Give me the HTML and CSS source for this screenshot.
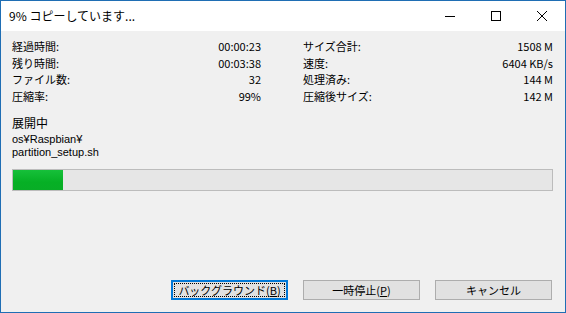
FILE: index.html
```html
<!DOCTYPE html>
<html lang="ja">
<head>
<meta charset="utf-8">
<link rel="stylesheet" href="styles.css">
</head>
<body>
<div class="window">
  <div class="titlebar">
    <div class="title">9% コピーしています...</div>
    <div class="caption-buttons">
      <div class="cbtn"><svg width="10" height="10" viewBox="0 0 10 10"><path d="M0 5.5H10" stroke="#000" stroke-width="1"/></svg></div>
      <div class="cbtn"><svg width="10" height="10" viewBox="0 0 10 10"><rect x="0.5" y="0.5" width="9" height="9" fill="none" stroke="#000" stroke-width="1"/></svg></div>
      <div class="cbtn"><svg width="10" height="10" viewBox="0 0 10 10"><path d="M0 0L10 10M10 0L0 10" stroke="#000" stroke-width="1"/></svg></div>
    </div>
  </div>
  <div class="content">
    <div class="stats">
      <div class="col">
        <div class="row"><span>経過時間:</span><span>00:00:23</span></div>
        <div class="row"><span>残り時間:</span><span>00:03:38</span></div>
        <div class="row"><span>ファイル数:</span><span>32</span></div>
        <div class="row"><span>圧縮率:</span><span>99%</span></div>
      </div>
      <div class="col">
        <div class="row"><span>サイズ合計:</span><span>1508 M</span></div>
        <div class="row"><span>速度:</span><span>6404 KB/s</span></div>
        <div class="row"><span>処理済み:</span><span>144 M</span></div>
        <div class="row"><span>圧縮後サイズ:</span><span>142 M</span></div>
      </div>
    </div>
    <div class="section-title">展開中</div>
    <div class="path">
      <div class="path-line">os¥Raspbian¥</div>
      <div class="path-line">partition_setup.sh</div>
    </div>
    <div class="progress"><div class="progress-fill" style="width: 9.3%"></div></div>
    <div class="spacer"></div>
    <div class="buttons">
      <button class="btn focused"><span class="focus-ring">バックグラウンド(<u>B</u>)</span></button>
      <button class="btn">一時停止(<u>P</u>)</button>
      <button class="btn">キャンセル</button>
    </div>
  </div>
</div>
</body>
</html>
```

FILE: styles.css
```css
html, body {
  margin: 0;
  padding: 0;
}
body {
  width: 566px;
  height: 313px;
  font-family: "Noto Sans CJK JP", "Liberation Sans", sans-serif;
  font-size: 11px;
  color: #000;
}
.window {
  box-sizing: border-box;
  width: 566px;
  height: 313px;
  border: 1px solid #1f6eb4;
  background: #f0f0f0;
  display: flex;
  flex-direction: column;
}
.titlebar {
  height: 30px;
  background: #fff;
  display: flex;
  align-items: center;
  justify-content: space-between;
}
.title {
  padding-left: 8px;
  font-size: 12px;
  padding-bottom: 2px;
}
.caption-buttons {
  display: flex;
  height: 30px;
}
.cbtn {
  width: 46px;
  height: 30px;
  display: flex;
  align-items: center;
  justify-content: center;
}
.content {
  flex: 1;
  display: flex;
  flex-direction: column;
  padding: 7px 12px 12px 11px;
}
.stats {
  display: grid;
  grid-template-columns: 249px 250px;
  column-gap: 42px;
}
.row {
  display: flex;
  justify-content: space-between;
  height: 16.5px;
  line-height: 16.5px;
}
.section-title {
  margin-top: 11px;
  font-size: 12px;
  line-height: 16px;
}
.path {
  margin-top: 2px;
  font-family: "Liberation Sans", "Noto Sans CJK JP", sans-serif;
  font-size: 11px;
}
.path-line {
  height: 13px;
  line-height: 13px;
}
.progress {
  margin-top: 10px;
  height: 20px;
  border: 1px solid #bcbcbc;
  background: #e6e6e6;
  width: 539px;
}
.progress-fill {
  height: 100%;
  background: linear-gradient(#16c03a, #06b025 60%, #08ad26);
}
.spacer {
  flex: 1;
}
.buttons {
  display: flex;
  justify-content: flex-end;
  gap: 15px;
  padding-right: 1px;
}
.btn {
  box-sizing: border-box;
  width: 117px;
  height: 20px;
  background: #e1e1e1;
  border: 1px solid #adadad;
  font-family: "Noto Sans CJK JP", "Liberation Sans", sans-serif;
  font-size: 11px;
  color: #000;
  padding: 0;
  display: flex;
  align-items: center;
  justify-content: center;
  line-height: 14px;
}
.btn.focused {
  border: 2px solid #0078d7;
  padding: 1px;
}
.focus-ring {
  box-sizing: border-box;
  width: 100%;
  height: 100%;
  border: 1px dotted #000;
  display: flex;
  align-items: center;
  justify-content: center;
}
```
